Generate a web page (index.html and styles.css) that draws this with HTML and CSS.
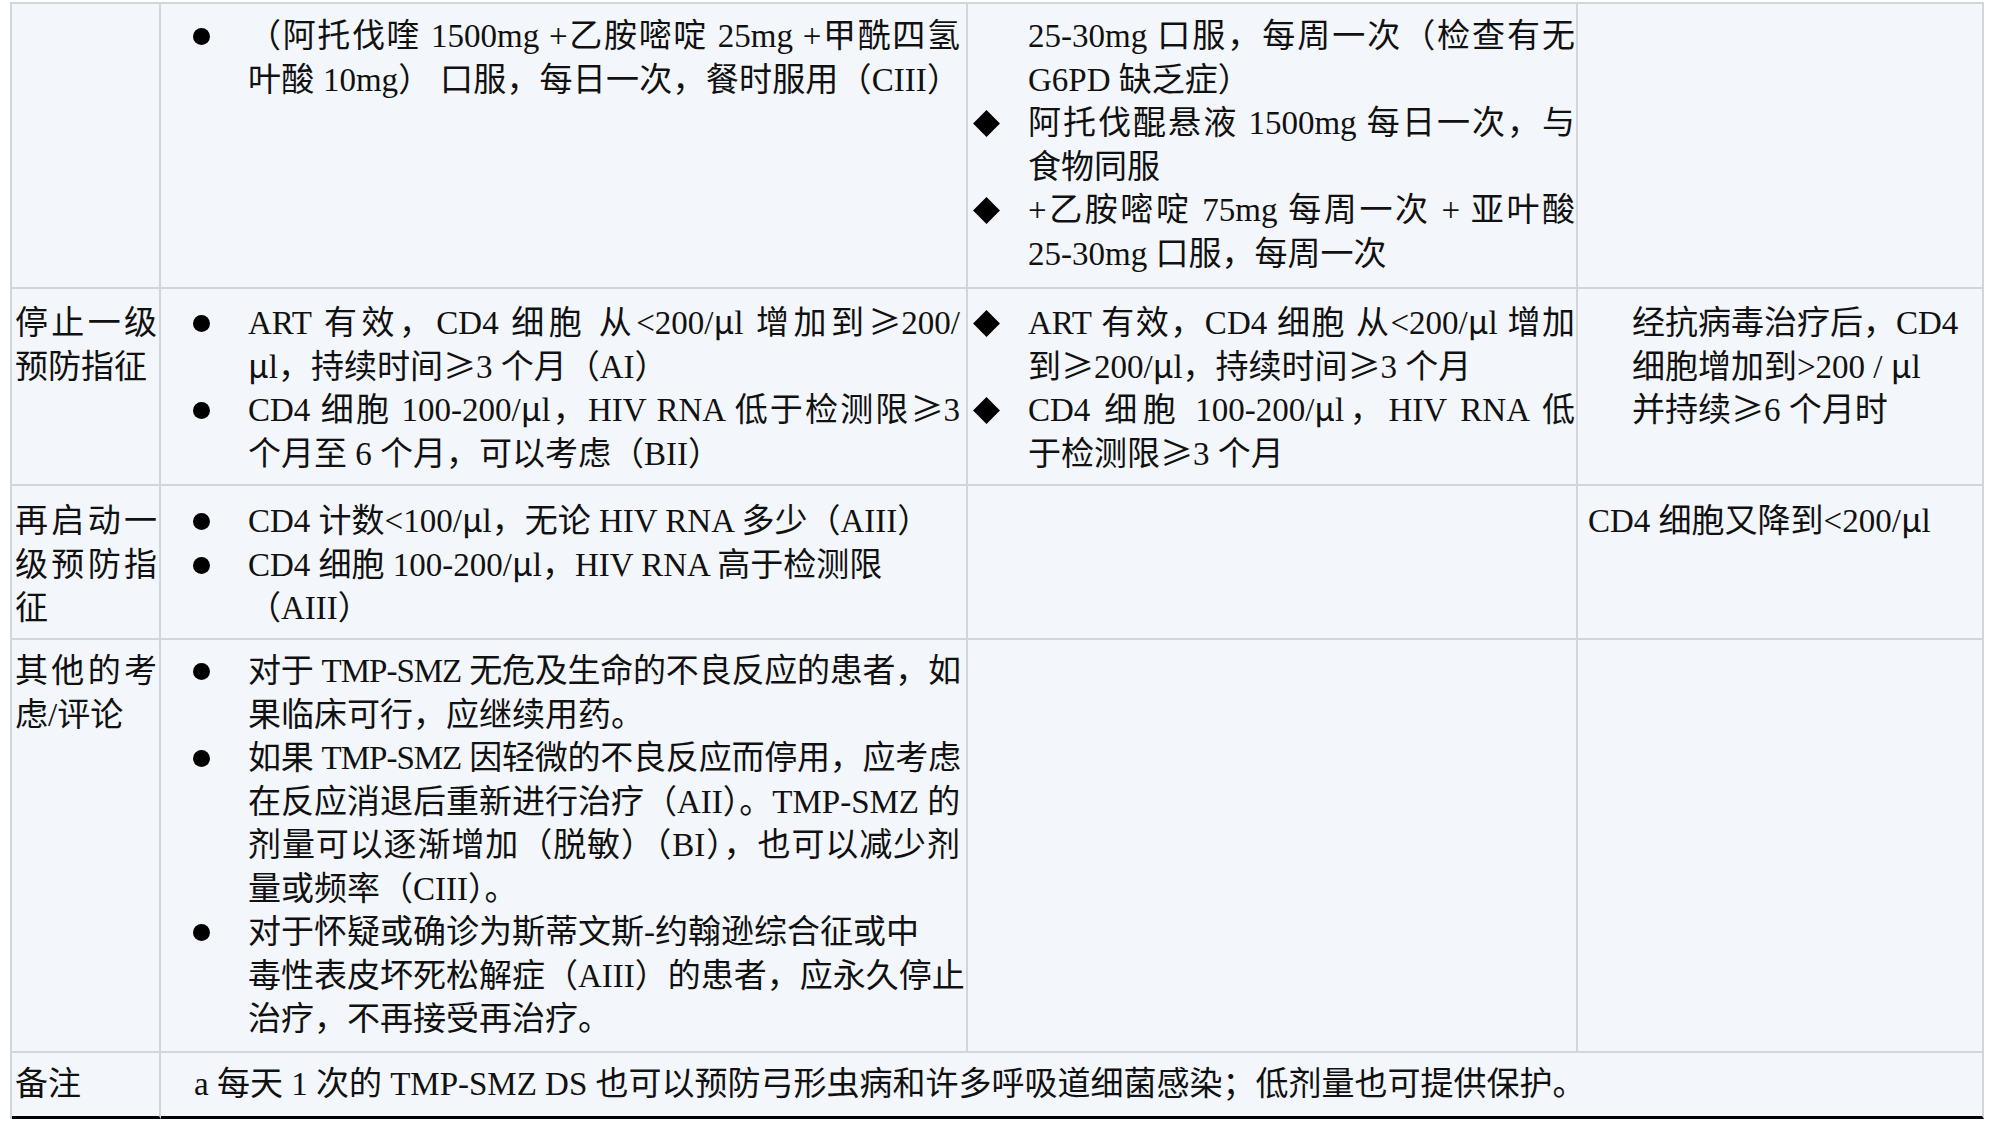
FILE: index.html
```html
<!DOCTYPE html>
<html lang="zh-CN">
<head>
<meta charset="utf-8">
<title>预防表</title>
<link rel="stylesheet" href="styles.css">
</head>
<body>
<div class="tbl">
  <!-- row 1 -->
  <div class="c c1 r1"></div>
  <div class="c c2 r1">
    <div class="item"><span class="mk dot"></span><div class="txt">
      <span class="ln j">（阿托伐喹 1500mg +乙胺嘧啶 25mg +甲酰四氢</span>
      <span class="ln j">叶酸 10mg） 口服，每日一次，餐时服用（CIII）</span>
    </div></div>
  </div>
  <div class="c c3 r1">
    <div class="item"><span class="mk none"></span><div class="txt">
      <span class="ln j">25-30mg 口服，每周一次（检查有无</span>
      <span class="ln">G6PD 缺乏症）</span>
    </div></div>
    <div class="item"><span class="mk dia"></span><div class="txt">
      <span class="ln j">阿托伐醌悬液 1500mg 每日一次，与</span>
      <span class="ln">食物同服</span>
    </div></div>
    <div class="item"><span class="mk dia"></span><div class="txt">
      <span class="ln j">+乙胺嘧啶 75mg 每周一次 + 亚叶酸</span>
      <span class="ln">25-30mg 口服，每周一次</span>
    </div></div>
  </div>
  <div class="c c4 r1"></div>

  <!-- row 2 -->
  <div class="c c1 r2">
    <span class="ln j">停止一级</span>
    <span class="ln">预防指征</span>
  </div>
  <div class="c c2 r2">
    <div class="item"><span class="mk dot"></span><div class="txt">
      <span class="ln j">ART 有效，CD4 细胞 从&lt;200/<span class="cj">μ</span>l 增加到<span class="cj">≥</span>200/</span>
      <span class="ln"><span class="cj">μ</span>l，持续时间<span class="cj">≥</span>3 个月（AI）</span>
    </div></div>
    <div class="item"><span class="mk dot"></span><div class="txt">
      <span class="ln j">CD4 细胞 100-200/<span class="cj">μ</span>l，HIV RNA 低于检测限<span class="cj">≥</span>3</span>
      <span class="ln">个月至 6 个月，可以考虑（BII）</span>
    </div></div>
  </div>
  <div class="c c3 r2">
    <div class="item"><span class="mk dia"></span><div class="txt">
      <span class="ln j">ART 有效，CD4 细胞 从&lt;200/<span class="cj">μ</span>l 增加</span>
      <span class="ln">到<span class="cj">≥</span>200/<span class="cj">μ</span>l，持续时间<span class="cj">≥</span>3 个月</span>
    </div></div>
    <div class="item"><span class="mk dia"></span><div class="txt">
      <span class="ln j">CD4 细胞 100-200/<span class="cj">μ</span>l，HIV RNA 低</span>
      <span class="ln">于检测限<span class="cj">≥</span>3 个月</span>
    </div></div>
  </div>
  <div class="c c4 r2 indent">
    <span class="ln">经抗病毒治疗后，CD4</span>
    <span class="ln">细胞增加到&gt;200 / <span class="cj">μ</span>l</span>
    <span class="ln">并持续<span class="cj">≥</span>6 个月时</span>
  </div>

  <!-- row 3 -->
  <div class="c c1 r3">
    <span class="ln j">再启动一</span>
    <span class="ln j">级预防指</span>
    <span class="ln">征</span>
  </div>
  <div class="c c2 r3">
    <div class="item"><span class="mk dot"></span><div class="txt">
      <span class="ln">CD4 计数&lt;100/<span class="cj">μ</span>l，无论 HIV RNA 多少（AIII）</span>
    </div></div>
    <div class="item"><span class="mk dot"></span><div class="txt">
      <span class="ln">CD4 细胞 100-200/<span class="cj">μ</span>l，HIV RNA 高于检测限</span>
      <span class="ln">（AIII）</span>
    </div></div>
  </div>
  <div class="c c3 r3"></div>
  <div class="c c4 r3">
    <span class="ln">CD4 细胞又降到&lt;200/<span class="cj">μ</span>l</span>
  </div>

  <!-- row 4 -->
  <div class="c c1 r4">
    <span class="ln j">其他的考</span>
    <span class="ln">虑/评论</span>
  </div>
  <div class="c c2 r4">
    <div class="item"><span class="mk dot"></span><div class="txt">
      <span class="ln j t">对于 TMP-SMZ 无危及生命的不良反应的患者，如</span>
      <span class="ln">果临床可行，应继续用药。</span>
    </div></div>
    <div class="item"><span class="mk dot"></span><div class="txt">
      <span class="ln j t">如果 TMP-SMZ 因轻微的不良反应而停用，应考虑</span>
      <span class="ln j">在反应消退后重新进行治疗（AII）。TMP-SMZ 的</span>
      <span class="ln j">剂量可以逐渐增加（脱敏）（BI），也可以减少剂</span>
      <span class="ln">量或频率（CIII）。</span>
    </div></div>
    <div class="item"><span class="mk dot"></span><div class="txt">
      <span class="ln">对于怀疑或确诊为斯蒂文斯-约翰逊综合征或中</span>
      <span class="ln j">毒性表皮坏死松解症（AIII）的患者，应永久停止</span>
      <span class="ln">治疗，不再接受再治疗。</span>
    </div></div>
  </div>
  <div class="c c3 r4"></div>
  <div class="c c4 r4"></div>

  <!-- row 5 -->
  <div class="c c1 r5">
    <span class="ln">备注</span>
  </div>
  <div class="c span r5">
    <span class="ln">a 每天 1 次的 TMP-SMZ DS 也可以预防弓形虫病和许多呼吸道细菌感染；低剂量也可提供保护。</span>
  </div>
</div>
</body>
</html>
```

FILE: styles.css
```css
* {
  box-sizing: border-box;
}

html, body {
  margin: 0;
  padding: 0;
  background: #ffffff;
}

body {
  font-family: "Liberation Serif", "Noto Sans CJK SC", serif;
  font-size: 33px;
  line-height: 43.5px;
  color: #111111;
}

.tbl {
  display: grid;
  grid-template-columns: 149px 807px 610px 406px;
  grid-template-rows: 285px 197px 154px 413px 66px;
  width: 1974px;
  margin: 2px 0 0 10px;
  border-top: 2px solid #d2d6db;
  border-left: 2px solid #d2d6db;
  background: #f3f6fa;
}

.c {
  border-right: 2px solid #d2d6db;
  border-bottom: 2px solid #d2d6db;
  background: #f3f6fa;
  overflow: hidden;
}

.r1 { padding-top: 11px; }
.r2 { padding-top: 13px; }
.r3 { padding-top: 14px; }
.r4 { padding-top: 10px; }
.r5 {
  padding-top: 10px;
  border-bottom: 3px solid #000000;
}

.c1 {
  padding-left: 3px;
  padding-right: 2px;
}

.c2 {
  padding-right: 6px;
}

.c3 {
  padding-right: 1px;
}

.c4 {
  padding-left: 10px;
}

.c4.indent {
  padding-left: 54px;
}

.span {
  grid-column: 2 / 5;
  padding-left: 33px;
}

.ln {
  display: block;
  white-space: nowrap;
  text-align: left;
}

.ln.j {
  text-align: justify;
  text-align-last: justify;
}

.ln.t {
  letter-spacing: -1px;
}

.cj {
  font-family: "Noto Sans CJK SC", sans-serif;
  line-height: 0;
}

.item {
  display: flex;
  align-items: flex-start;
}

.txt {
  flex: 1;
  min-width: 0;
}

.mk {
  flex: none;
  position: relative;
  height: 43.5px;
}

.c2 .mk {
  width: 87px;
}

.c3 .mk {
  width: 60px;
}

.mk.dot::before {
  content: "";
  position: absolute;
  left: 32px;
  top: 13px;
  width: 17px;
  height: 17px;
  border-radius: 50%;
  background: #000000;
}

.mk.dia::before {
  content: "";
  position: absolute;
  left: 9px;
  top: 12px;
  width: 19px;
  height: 19px;
  background: #000000;
  transform: rotate(45deg);
}
```
